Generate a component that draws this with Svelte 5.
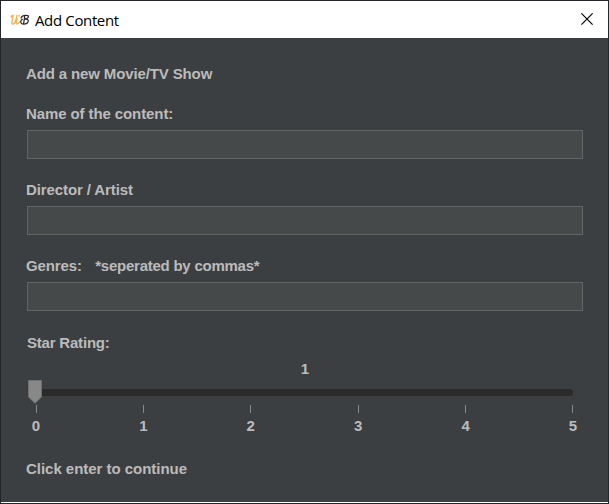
<script>
  const fields = [
    { id: 'name', label: 'Name of the content:', hint: '' },
    { id: 'director', label: 'Director / Artist', hint: '' },
    { id: 'genres', label: 'Genres:   ', hint: '*seperated by commas*' },
  ];
  const marks = [0, 1, 2, 3, 4, 5];
</script>

<div class="window">
  <header>
    <svg class="logo" width="20" height="15" viewBox="0 0 20 15" fill="none" stroke-linecap="round" stroke-linejoin="round">
      <path d="M1 3.2 Q1.6 1.6 3.2 1.3 L2.1 6.8 Q1.2 10.8 3.4 10 Q5.6 9 7 1.5 M7 5 L6.2 8.8 Q6.2 10.6 8 9.6 L9.8 8 M9.4 1.4 L9 2.2" stroke="#edb650" stroke-width="1.4" />
      <path d="M11 4 Q12 1.4 15.6 1.3 Q19.4 1.2 18.3 3.2 Q17.5 4.8 14.4 5.1 M14.7 2.6 L13.6 9.6 M14.4 5.1 Q19 4.7 18.2 7.4 Q17.4 10.3 13.7 10.2 Q10.6 10 10.8 7.4 Q11 5.8 12.3 5.3" stroke="#29272a" stroke-width="1.25" />
    </svg>
    <span class="title">Add Content</span>
    <svg class="close" width="12" height="12" viewBox="0 0 12 12"><path d="M.4 .4 L11.6 11.6 M11.6 .4 L.4 11.6" stroke="#000" stroke-width="1.15" /></svg>
  </header>
  <main>
    <div class="text heading">Add a new Movie/TV Show</div>
    {#each fields as field}
      <div class="field">
        <label class="text" for={field.id}>{field.label}<span class="hint">{field.hint}</span></label>
        <input id={field.id} type="text" />
      </div>
    {/each}
    <div class="text rating">Star Rating:</div>
    <div class="text value">1</div>
    <div class="slider">
      <div class="track"></div>
      <svg class="thumb" width="15" height="24" viewBox="0 0 15 24"><path d="M.5 .5 H13.5 V17 L7 23.3 L.5 17 Z" fill="#888" stroke="#707070" /></svg>
    </div>
    <div class="scale">
      {#each marks as mark}
        <div class="mark"><i></i><span class="text">{mark}</span></div>
      {/each}
    </div>
    <div class="text footer">Click enter to continue</div>
  </main>
</div>

<style>
  :global(body) { margin: 0; background: #3c3f41; }
  .window {
    box-sizing: border-box; width: 609px; height: 504px; overflow: hidden;
    border: 1px solid #25262b; background: #fff; display: flex; flex-direction: column;
  }
  header { height: 37px; flex: none; display: flex; align-items: center; background: #fff; }
  .logo { margin-left: 9px; margin-top: 3px; }
  .title { margin-left: 5px; font: 15px/20px "Open Sans", "Noto Sans", sans-serif; color: #000; letter-spacing: -0.36px; }
  .close { margin-left: auto; margin-right: 15px; position: relative; top: -0.5px; }
  main { height: 464px; flex: none; box-sizing: border-box; padding: 26px 25px 0; background: #3c3f41; display: flex; flex-direction: column; }
  .text { font: bold 15px/20px "Liberation Sans", Arial, sans-serif; color: #bbb; white-space: pre; }
  .heading { margin-bottom: 20px; letter-spacing: -0.13px; }
  .field { display: flex; flex-direction: column; height: 76px; flex: none; }
  .field label { letter-spacing: -0.1px; }
  .field .hint { margin-left: 1px; letter-spacing: -0.24px; }
  input {
    box-sizing: border-box; width: 556px; height: 29px; margin: 6px 0 0 1px; padding: 2px 6px;
    border: 1px solid #646464; border-radius: 0; background: #45494a; color: #bbb; outline: none;
    font: 15px "Liberation Sans", Arial, sans-serif;
  }
  .rating { margin: 1px 0 0 1px; letter-spacing: -0.2px; }
  .value { margin-top: 6px; text-align: center; padding-left: 1px; }
  .slider { position: relative; height: 26px; display: flex; align-items: center; }
  .track { width: 544px; height: 7px; margin-left: 3px; border-radius: 4px; background: #2b2b2b; }
  .thumb { position: absolute; left: 2px; top: 1px; }
  .scale { display: flex; justify-content: space-between; width: 557px; }
  .mark { width: 20px; display: flex; flex-direction: column; align-items: center; }
  .mark i { width: 1px; height: 8px; margin-bottom: 3px; background: #888; }
  .footer { margin-top: 23px; letter-spacing: -0.03px; }
</style>
